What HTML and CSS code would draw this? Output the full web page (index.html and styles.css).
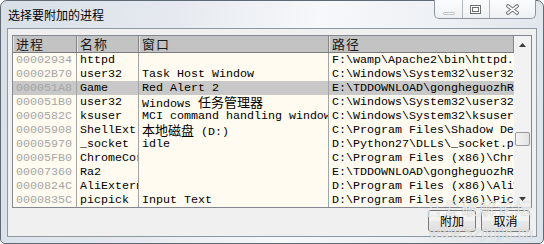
FILE: index.html
```html
<!DOCTYPE html>
<html lang="zh-CN">
<head>
<meta charset="utf-8">
<title>选择要附加的进程</title>
<link rel="stylesheet" href="styles.css">
</head>
<body>
<div class="window">
  <div class="titlebar">
    <div class="title">选择要附加的进程</div>
    <div class="caption">
      <div class="cbtn min"><span class="min-glyph"></span></div>
      <div class="cbtn max">
        <svg width="11" height="9" viewBox="0 0 11 9"><rect x="0.5" y="0.5" width="10" height="8" fill="#fff" stroke="#6f6f6f"/><rect x="2.5" y="2.5" width="6" height="4" fill="#fff" stroke="#6f6f6f"/></svg>
      </div>
      <div class="cbtn close">
        <svg width="13" height="11" viewBox="0 0 13 11"><path d="M2 2 L11 9 M11 2 L2 9" stroke="#7a7a7a" stroke-width="3.6" stroke-linecap="square"/><path d="M2 2 L11 9 M11 2 L2 9" stroke="#fff" stroke-width="1.6" stroke-linecap="square"/></svg>
      </div>
    </div>
  </div>
  <div class="client">
    <div class="list">
      <div class="table">
        <div class="row head">
          <div class="cell">进程</div><div class="cell">名称</div><div class="cell">窗口</div><div class="cell">路径</div>
        </div>
        <div class="row"><div class="cell id">00002934</div><div class="cell">httpd</div><div class="cell"></div><div class="cell">F:\wamp\Apache2\bin\httpd.exe</div></div>
        <div class="row"><div class="cell id">00002B70</div><div class="cell">user32</div><div class="cell">Task Host Window</div><div class="cell">C:\Windows\System32\user32.dll</div></div>
        <div class="row selected"><div class="cell id">000051A8</div><div class="cell">Game</div><div class="cell">Red Alert 2</div><div class="cell">E:\TDDOWNLOAD\gongheguozhRa2\game.exe</div></div>
        <div class="row"><div class="cell id">000051B0</div><div class="cell">user32</div><div class="cell">Windows <span class="cjk">任务管理器</span></div><div class="cell">C:\Windows\System32\user32.dll</div></div>
        <div class="row"><div class="cell id">0000582C</div><div class="cell">ksuser</div><div class="cell">MCI command handling window</div><div class="cell">C:\Windows\System32\ksuser.dll</div></div>
        <div class="row"><div class="cell id">00005908</div><div class="cell">ShellExt</div><div class="cell"><span class="cjk">本地磁盘</span> (D:)</div><div class="cell">C:\Program Files\Shadow Defender\ShellExt.dll</div></div>
        <div class="row"><div class="cell id">00005970</div><div class="cell">_socket</div><div class="cell">idle</div><div class="cell">D:\Python27\DLLs\_socket.pyd</div></div>
        <div class="row"><div class="cell id">00005FB0</div><div class="cell">ChromeCore</div><div class="cell"></div><div class="cell">C:\Program Files (x86)\Chrome\ChromeCore.dll</div></div>
        <div class="row"><div class="cell id">00007360</div><div class="cell">Ra2</div><div class="cell"></div><div class="cell">E:\TDDOWNLOAD\gongheguozhRa2\Ra2.exe</div></div>
        <div class="row"><div class="cell id">0000824C</div><div class="cell">AliExternal</div><div class="cell"></div><div class="cell">D:\Program Files (x86)\AliWangWang\AliExternal.exe</div></div>
        <div class="row"><div class="cell id">0000835C</div><div class="cell">picpick</div><div class="cell">Input Text</div><div class="cell">D:\Program Files (x86)\PicPick\picpick.exe</div></div>
      </div>
      <div class="vscroll">
        <div class="sbtn"><svg width="7" height="4" viewBox="0 0 7 4"><path d="M0 4 L3.5 0 L7 4 Z" fill="#3c3c3c"/></svg></div>
        <div class="track"><div class="thumb"></div></div>
        <div class="sbtn"><svg width="7" height="4" viewBox="0 0 7 4"><path d="M0 0 L3.5 4 L7 0 Z" fill="#3c3c3c"/></svg></div>
      </div>
    </div>
    <div class="buttons">
      <button class="btn attach">附加</button>
      <button class="btn cancel">取消</button>
    </div>
  </div>
  <div class="watermark">
    <div class="wm-cn">吾爱破解论坛</div>
    <div class="wm-url">www.52pojie.cn</div>
  </div>
</div>
</body>
</html>
```
FILE: styles.css
```css
* { box-sizing: border-box; }
html, body { margin: 0; padding: 0; background: #ffffff; }
body {
  width: 544px;
  height: 244px;
  overflow: hidden;
  font-family: "Noto Sans CJK SC", sans-serif;
}
.window {
  position: relative;
  width: 544px;
  height: 244px;
  border: 1px solid #5f6a75;
  border-radius: 7px 7px 5px 5px;
  background: linear-gradient(100deg, #d8dfe7 0%, #e6eaf0 30%, #f6f8fa 55%, #eef1f5 75%, #dde3ea 100%);
  display: flex;
  flex-direction: column;
  padding: 0 6px 6px 6px;
}
.titlebar {
  height: 27px;
  display: flex;
  align-items: flex-start;
}
.title {
  font-size: 12px;
  line-height: 16px;
  margin: 6px 0 0 1px;
  color: #000;
}
.caption {
  margin-left: auto;
  margin-right: 1px;
  margin-top: -1px;
  width: 102px;
  height: 19px;
  display: flex;
  border: 1px solid #8c95a0;
  border-top: none;
  border-radius: 0 0 5px 5px;
  overflow: hidden;
  background: linear-gradient(#fbfcfd, #eef1f4);
}
.cbtn {
  position: relative;
  height: 18px;
  border-right: 1px solid #b0b8c2;
}
.cbtn.min { width: 28px; }
.cbtn.max { width: 27px; }
.cbtn.close { width: 45px; border-right: none; }
.min-glyph {
  position: absolute;
  left: 8px;
  top: 12px;
  width: 12px;
  height: 3px;
  border: 1px solid #c4c4c4;
  border-radius: 1px;
  background: #fff;
}
.cbtn.max svg { position: absolute; left: 7px; top: 5px; }
.cbtn.close svg { position: absolute; left: 16px; top: 4px; }

.client {
  flex: 1;
  background: #f0f0f0;
  border: 1px solid #8f99a4;
  display: flex;
  flex-direction: column;
  padding: 6px 4px 0 4px;
}
.list {
  height: 173px;
  border: 1px solid #828790;
  display: flex;
  background: #fffbf0;
}
.table {
  flex: 1;
  display: flex;
  flex-direction: column;
  overflow: hidden;
}
.row {
  display: grid;
  grid-template-columns: 64px 62px 190px 1fr;
  height: 14px;
}
.cell {
  overflow: hidden;
  white-space: nowrap;
  padding-left: 3px;
  border-right: 1px solid #a4a4a4;
  font-family: "Liberation Mono", "Noto Sans CJK SC", monospace;
  font-size: 11.67px;
  line-height: 14px;
  color: #000;
}
.cell:last-child { border-right: none; }
.cell.id { color: #a6a6a6; }
.cjk {
  font-family: "Noto Sans CJK SC", sans-serif;
  font-size: 13px;
  line-height: 14px;
}
.row.selected { background: #c8c8c8; }
.row.head {
  height: 17px;
  background: #c3c3c3;
  border-bottom: 1px solid #7c7c7c;
}
.row.head .cell {
  overflow: visible;
  font-family: "Noto Sans CJK SC", sans-serif;
  font-size: 13px;
  letter-spacing: 1px;
  line-height: 16px;
  padding-left: 3px;
  color: #1a1a1a;
  border-right: 1px solid #858585;
  box-shadow: inset 1px 0 0 #e2e2e2;
}
.vscroll {
  width: 17px;
  display: flex;
  flex-direction: column;
  background: #f2f2f2;
}
.sbtn {
  height: 17px;
  display: flex;
  align-items: center;
  justify-content: center;
}
.track { flex: 1; }
.thumb {
  margin: 79px 1px 0 1px;
  height: 14px;
  border: 1px solid #999;
  border-radius: 2px;
  background: linear-gradient(to right, #f4f4f4, #e3e3e3);
}
.buttons {
  display: flex;
  justify-content: flex-end;
  gap: 5px;
  margin-top: 2px;
  margin-right: 2px;
}
.btn {
  height: 22px;
  padding: 0;
  border: 1px solid #7a7a7a;
  border-radius: 3px;
  background: linear-gradient(#f8f8f8 0%, #f1f1f1 50%, #e8e8e8 51%, #e0e0e0 100%);
  font-family: "Noto Sans CJK SC", sans-serif;
  font-size: 12px;
  line-height: 18px;
  color: #000;
}
.btn.attach { width: 48px; }
.btn.cancel { width: 49px; }
.watermark {
  position: absolute;
  left: 424px;
  top: 196px;
  color: rgba(255, 255, 255, 0.78);
  text-shadow: 0 0 1px rgba(0, 0, 0, 0.3);
  pointer-events: none;
}
.wm-cn {
  font-family: "Noto Sans CJK SC", sans-serif;
  font-size: 17px;
  letter-spacing: 1px;
  line-height: 22px;
}
.wm-url {
  font-family: "Liberation Sans", sans-serif;
  font-size: 14px;
  letter-spacing: 0.5px;
  line-height: 16px;
  margin-top: 6px;
  margin-left: 4px;
}
```
